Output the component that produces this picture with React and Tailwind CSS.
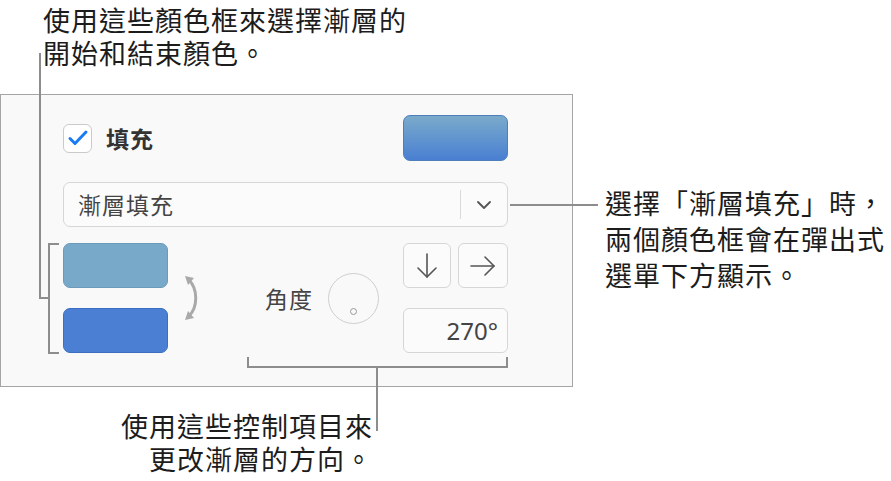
import React from 'react';

// Callout lines that tie the notes to the controls
function Leaders() {
  return (
    <svg
      className="absolute inset-0 pointer-events-none"
      width="891"
      height="481"
      viewBox="0 0 891 481"
      fill="none"
      stroke="#8d8d8d"
      strokeWidth="2"
    >
      <path d="M40 53 V298 H49" />
      <path d="M59 244 H49 V353 H59" />
      <path d="M510 205 H598" />
      <path d="M248 357 V367 H507 V357" />
      <path d="M377 367 V431" />
    </svg>
  );
}

function ColorWell({ className }) {
  return <div className={`w-[105px] h-[45px] rounded-[7px] border ${className}`} />;
}

function SwapArrow() {
  return (
    <svg width="20" height="50" viewBox="0 0 20 50" fill="none">
      <path d="M6 7 C 15 16, 15 34, 6 43" stroke="#a9a9a9" strokeWidth="3" strokeLinecap="round" />
      <path d="M2 3 L11 5 L5 12 Z" fill="#a9a9a9" />
      <path d="M2 47 L11 45 L5 38 Z" fill="#a9a9a9" />
    </svg>
  );
}

export default function App() {
  return (
    <div className="relative w-[891px] h-[481px] bg-white overflow-hidden font-['Noto_Sans_CJK_TC','Noto_Sans',sans-serif]">
      <div className="pl-[43px] pt-[3px] text-[27px] leading-[33px] tracking-[1px] text-[#1c1c1c]">
        使用這些顏色框來選擇漸層的
        <br />
        開始和結束顏色。
      </div>

      <div className="flex items-start mt-[25px]">
        {/* fill inspector panel */}
        <div className="w-[573px] h-[293px] border border-[#a5a5a5] bg-[#f9f9f9] pl-[62px] pr-[64px] pt-[20px] flex flex-col">
          <div className="h-[46px] flex items-center justify-between">
            <div className="flex items-center">
              <div className="w-[29px] h-[29px] rounded-[6px] border border-[#cacaca] bg-white flex items-center justify-center">
                <svg width="22" height="18" viewBox="0 0 22 18" fill="none">
                  <path d="M3 9.5 L8 14.5 L19 3" stroke="#1a7cf4" strokeWidth="3" strokeLinecap="round" strokeLinejoin="round" />
                </svg>
              </div>
              <span className="ml-[14px] text-[23px] tracking-[1px] font-bold text-[#333]">填充</span>
            </div>
            <div className="w-[105px] h-[46px] rounded-[7px] border border-[#4f7fb8] bg-gradient-to-b from-[#7aaaca] to-[#4a7fd2]" />
          </div>

          <div className="mt-[21px] h-[45px] rounded-[7px] border border-[#d6d6d6] bg-[#fbfbfb] flex items-center">
            <span className="flex-1 pl-[14px] text-[23px] tracking-[1px] text-[#444]">漸層填充</span>
            <div className="w-px h-[29px] bg-[#dadada]" />
            <div className="w-[46px] flex justify-center">
              <svg width="16" height="10" viewBox="0 0 16 10" fill="none">
                <path d="M2 2 L8 8 L14 2" stroke="#555" strokeWidth="1.8" strokeLinecap="round" strokeLinejoin="round" />
              </svg>
            </div>
          </div>

          <div className="mt-[16px] flex items-center">
            <div className="flex flex-col gap-[20px]">
              <ColorWell className="border-[#6c9aba] bg-[#79a9c9]" />
              <ColorWell className="border-[#3d6fc0] bg-[#4a7fd3]" />
            </div>
            <div className="ml-[15px]">
              <SwapArrow />
            </div>
            <span className="ml-[62px] text-[23px] tracking-[1px] text-[#444]">角度</span>
            <div className="ml-[15px] w-[51px] h-[51px] rounded-full border border-[#cfcfcf] flex items-end justify-center pb-[8px]">
              <div className="w-[7px] h-[7px] rounded-full border-[1.5px] border-[#9a9a9a]" />
            </div>
            <div className="ml-auto flex flex-col gap-[20px]">
              <div className="flex gap-[7px]">
                <div className="w-[48px] h-[45px] rounded-[6px] border border-[#d6d6d6] bg-[#fbfbfb] flex items-center justify-center">
                  <svg width="20" height="26" viewBox="0 0 20 26" fill="none" stroke="#555" strokeWidth="1.6" strokeLinecap="round" strokeLinejoin="round">
                    <path d="M10 1 V24" />
                    <path d="M1 15 L10 24 L19 15" />
                  </svg>
                </div>
                <div className="w-[50px] h-[45px] rounded-[6px] border border-[#d6d6d6] bg-[#fbfbfb] flex items-center justify-center">
                  <svg width="26" height="20" viewBox="0 0 26 20" fill="none" stroke="#555" strokeWidth="1.6" strokeLinecap="round" strokeLinejoin="round">
                    <path d="M1 10 H24" />
                    <path d="M15 1 L24 10 L15 19" />
                  </svg>
                </div>
              </div>
              <div className="w-[105px] h-[45px] rounded-[6px] border border-[#d6d6d6] bg-[#fbfbfb] flex items-center justify-end pr-[9px] text-[24px] text-[#444] font-['Noto_Sans',sans-serif]">
                270°
              </div>
            </div>
          </div>
        </div>

        <div className="ml-[32px] mt-[91px] text-[27px] leading-[36px] tracking-[1px] text-[#1c1c1c] whitespace-nowrap">
          選擇「漸層填充」時，
          <br />
          兩個顏色框會在彈出式
          <br />
          選單下方顯示。
        </div>
      </div>

      <div className="mt-[22px] w-[373px] text-right text-[27px] leading-[33px] tracking-[1px] text-[#1c1c1c]">
        使用這些控制項目來
        <br />
        更改漸層的方向。
      </div>

      <Leaders />
    </div>
  );
}
